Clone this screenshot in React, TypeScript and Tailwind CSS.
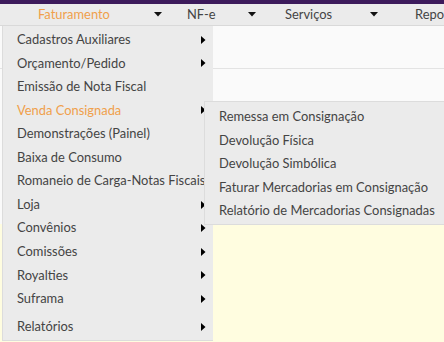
import React from 'react'

const font = {fontFamily: 'Lato, "Liberation Sans", sans-serif'}

const mainItems = [
    {label: 'Cadastros Auxiliares', sub: true},
    {label: 'Orçamento/Pedido', sub: true},
    {label: 'Emissão de Nota Fiscal', sub: false},
    {label: 'Venda Consignada', sub: true, active: true},
    {label: 'Demonstrações (Painel)', sub: false},
    {label: 'Baixa de Consumo', sub: false},
    {label: 'Romaneio de Carga-Notas Fiscais', sub: false},
    {label: 'Loja', sub: true},
    {label: 'Convênios', sub: true},
    {label: 'Comissões', sub: true},
    {label: 'Royalties', sub: true},
    {label: 'Suframa', sub: true},
]

const subItems = [
    'Remessa em Consignação',
    'Devolução Física',
    'Devolução Simbólica',
    'Faturar Mercadorias em Consignação',
    'Relatório de Mercadorias Consignadas',
]

const Arrow = () => (
    <svg width="5" height="8" viewBox="0 0 5 8" className="shrink-0">
        <path d="M0 0 L4.5 4 L0 8 Z" fill="#000"/>
    </svg>
)

const Caret = () => (
    <svg width="8" height="5" viewBox="0 0 8 5">
        <path d="M0 0 H8 L4 4.5 Z" fill="#111"/>
    </svg>
)

export default function App(): React.JSX.Element {
    return (
        <div className="w-[444px] h-[342px] overflow-hidden bg-[#fafafa] relative text-[12.9px] text-[#444]" style={font}>
            <div className="h-[4px] bg-[#3c1a5b]"></div>
            <nav className="h-[22px] bg-[#ebebeb] border-b border-[#d9d9d9] flex items-center whitespace-nowrap overflow-hidden">
                <span className="ml-[38px] w-[116px] shrink-0 text-[#f0a04b]">Faturamento</span>
                <Caret/>
                <span className="ml-[25px] w-[61px] shrink-0">NF-e</span>
                <Caret/>
                <span className="ml-[29px] w-[85px] shrink-0">Serviços</span>
                <Caret/>
                <span className="ml-[37px]">Repo</span>
            </nav>
            <div className="h-[43px] border-b border-[#e3e3e3]"></div>
            <div className="h-[155px]"></div>
            <div className="h-[200px] bg-[#fffde0]"></div>

            <div className="absolute left-[2px] top-[26px] w-[211px] h-[315px] bg-[#ebebeb] border-l border-b border-[#dcdcdc] pt-[2px]">
                {mainItems.map(item => (
                    <div key={item.label}
                         className="h-[23.55px] flex items-center justify-between pl-[14px] pr-[7px] whitespace-nowrap">
                        <span className={item.active ? 'text-[#f0a04b]' : ''}>{item.label}</span>
                        {item.sub && <Arrow/>}
                    </div>
                ))}
                <div className="h-[28px] flex items-center justify-between pl-[14px] pr-[7px] pt-[5px]">
                    <span>Relatórios</span>
                    <Arrow/>
                </div>
            </div>

            <div className="absolute left-[204px] top-[101px] w-[241px] h-[124px] bg-[#ebebeb] border border-[#dcdcdc] pt-[3px]">
                {subItems.map(label => (
                    <div key={label} className="h-[23.5px] flex items-center pl-[14px] whitespace-nowrap">
                        {label}
                    </div>
                ))}
            </div>
        </div>
    )
}
